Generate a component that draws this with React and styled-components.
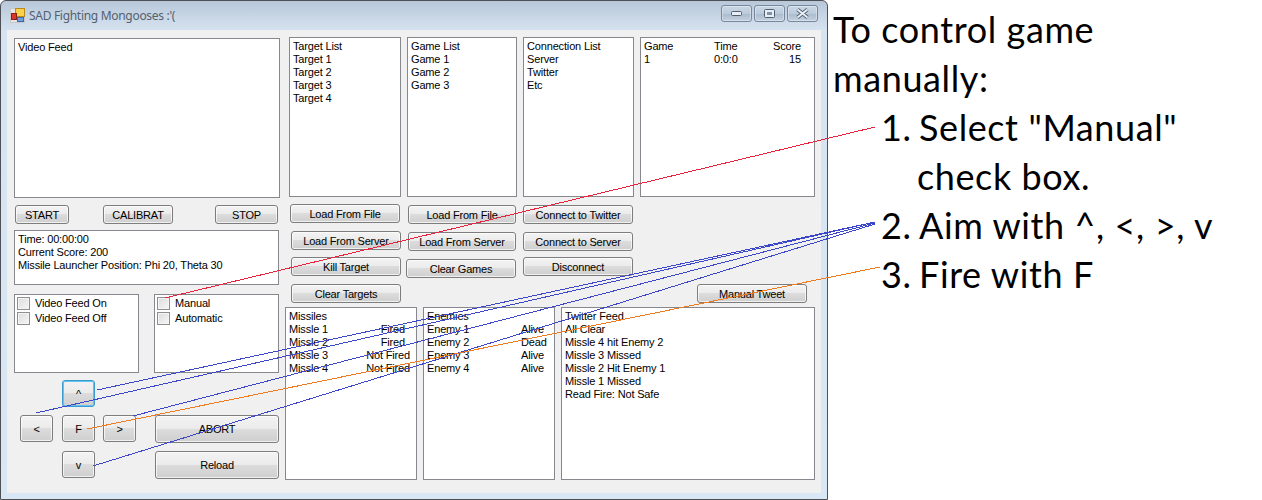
import React from 'react'
import styled, { createGlobalStyle } from 'styled-components'

const GlobalStyle = createGlobalStyle`
  html, body { margin: 0; padding: 0; background: #fff; }
  body { font-family: "Liberation Sans", Arial, sans-serif; font-size: 11px; color: #000; }
`

const Page = styled.div`
  position: relative;
  display: flex;
  width: 1262px;
  height: 500px;
  overflow: hidden;
`
const Window = styled.div`
  box-sizing: border-box;
  width: 828px;
  height: 500px;
  border: 1px solid #4d5157;
  border-radius: 6px 6px 0 0;
  background: linear-gradient(#b8c8d9 0, #d6e3f1 30px, #d9e6f3 100%);
  padding: 0 6px 6px;
  display: flex;
  flex-direction: column;
  letter-spacing: -0.16px;
`
const TitleBar = styled.div`
  height: 29px;
  flex: none;
  display: flex;
  align-items: center;
  padding: 0 3px 0 3px;
`
const TitleText = styled.span`
  margin-left: 4px;
  font-family: "Noto Sans", sans-serif;
  font-size: 12px;
  letter-spacing: -0.3px;
  color: #52616f;
`
const CaptionGroup = styled.div`
  margin-left: auto;
  display: flex;
  gap: 2px;
  margin-top: -5px;
`
const CaptionButton = styled.div`
  box-sizing: border-box;
  width: 31px;
  height: 17px;
  border: 1px solid #76889c;
  border-radius: 3px;
  background: linear-gradient(#c9d7e5, #bccbdb 50%, #aabbcd 52%, #c3d2e0);
  box-shadow: inset 0 0 0 1px rgba(255, 255, 255, 0.35);
  display: flex;
  align-items: center;
  justify-content: center;
`
const Client = styled.div`
  flex: 1;
  background: #f0f0f0;
  display: flex;
  padding-left: 7px;
`
const LeftColumn = styled.div`
  width: 266px;
  flex: none;
  padding-top: 8px;
`
const RightColumn = styled.div`
  margin-left: 5px;
  padding-top: 7px;
`
const Box = styled.div`
  box-sizing: border-box;
  background: #fff;
  border: 1px solid #86888e;
  width: ${p => p.$w}px;
  height: ${p => p.$h}px;
  padding: ${p => p.$pad || '2px 3px'};
  line-height: 13px;
  white-space: nowrap;
`
const ListsRow = styled.div`
  display: flex;
  gap: 6px;
  margin-left: 4px;
`
const FeedsRow = styled.div`
  display: flex;
  gap: 6px;
`
const Row = styled.div`
  display: grid;
  grid-template-columns: ${p => p.$cols};
  padding-right: ${p => p.$inset || 0}px;
`
const Status = styled.span`
  text-align: right;
  padding-right: ${p => p.$inset || 0}px;
`
const Button = styled.button`
  box-sizing: border-box;
  display: block;
  width: ${p => p.$w}px;
  height: ${p => p.$h || 19}px;
  margin: ${p => p.$mt || 0}px 0 0 ${p => p.$ml || 0}px;
  padding: 0;
  font: 11px "Liberation Sans", Arial, sans-serif;
  letter-spacing: -0.2px;
  color: #000;
  border: 1px solid ${p => (p.$focus ? '#3a9bd0' : '#7d7d7d')};
  border-radius: 3px;
  background: linear-gradient(#f3f3f3, #ebebeb 48%, #dcdcdc 50%, #cfcfcf);
  box-shadow: inset 0 0 0 1px ${p => (p.$focus ? '#62c3ee' : 'rgba(255, 255, 255, 0.7)')};
`
const ActionRow = styled.div`
  display: flex;
  margin: 7px 0 6px 1px;
`
const ChecksRow = styled.div`
  display: flex;
  gap: 15px;
  margin-top: 9px;
`
const CheckRow = styled.label`
  display: flex;
  align-items: center;
  gap: 5px;
  height: 15px;
`
const Check = styled.span`
  box-sizing: border-box;
  width: 13px;
  height: 13px;
  border: 1px solid #8e8f8f;
  background: linear-gradient(135deg, #dcdcdc, #f6f6f6);
  box-shadow: inset 0 0 0 1px #f4f4f4;
`
const ControlsRow = styled.div`
  display: flex;
  margin-top: 7px;
`
const Pad = styled.div`
  display: grid;
  grid-template-columns: 42px 41px 33px;
  grid-template-rows: 35px 36px 27px;
  margin-left: 6px;
`
const PadCell = styled.div`
  grid-column: ${p => p.$col};
  grid-row: ${p => p.$row};
`
const BigButtons = styled.div`
  display: flex;
  flex-direction: column;
  gap: 8px;
  margin: 35px 0 0 19px;
`
const ButtonArea = styled.div`
  display: flex;
  height: 103px;
  margin-top: 7px;
`
const ButtonColumn = styled.div`
  padding-top: ${p => p.$top || 0}px;
  margin-left: ${p => p.$ml}px;
`
const Instructions = styled.div`
  padding: 5px 0 0 5px;
  font-family: Lato, "Liberation Sans", sans-serif;
  font-size: 36px;
  letter-spacing: 0.6px;
  line-height: 49px;
  white-space: nowrap;
`
const Line = styled.div`
  padding-left: ${p => p.$indent || 0}px;
`
const Number = styled.span`
  display: inline-block;
  width: 38px;
`
const Overlay = styled.svg`
  position: absolute;
  left: 0;
  top: 0;
  pointer-events: none;
`

const TitleIcon = () => (
  <svg width="15" height="15" viewBox="0 0 15 15">
    <rect x="0.5" y="0.5" width="14" height="14" fill="#e6e6e6" stroke="#c8c8c8" />
    <rect x="5.5" y="0.5" width="9" height="8" fill="#f7d24a" stroke="#b98a1c" />
    <rect x="1.5" y="5.5" width="5" height="6" fill="#d8372c" stroke="#8e1e18" />
    <rect x="7.5" y="9.5" width="6" height="4" fill="#6f9fdc" stroke="#3d6aa8" />
  </svg>
)

const MinGlyph = () => (
  <svg width="11" height="5" viewBox="0 0 11 5">
    <rect x="0.5" y="0.5" width="10" height="4" rx="1" fill="#e8eef4" stroke="#4f5f70" />
  </svg>
)
const MaxGlyph = () => (
  <svg width="11" height="9" viewBox="0 0 11 9">
    <rect x="0.5" y="0.5" width="10" height="8" rx="1" fill="#e8eef4" stroke="#4f5f70" />
    <rect x="3" y="3" width="5" height="3" fill="#8093a6" />
  </svg>
)
const CloseGlyph = () => (
  <svg width="13" height="11" viewBox="0 0 13 11">
    <path d="M1.5 1.5 L11.5 9.5 M11.5 1.5 L1.5 9.5" stroke="#4f5f70" strokeWidth="3.6" />
    <path d="M1.5 1.5 L11.5 9.5 M11.5 1.5 L1.5 9.5" stroke="#e8eef4" strokeWidth="2" />
  </svg>
)

const targets = ['Target List', 'Target 1', 'Target 2', 'Target 3', 'Target 4']
const gameNames = ['Game List', 'Game 1', 'Game 2', 'Game 3']
const connections = ['Connection List', 'Server', 'Twitter', 'Etc']
const missiles = [
  ['Missle 1', 'Fired', 5],
  ['Missle 2', 'Fired', 5],
  ['Missle 3', 'Not Fired', 0],
  ['Missle 4', 'Not Fired', 0],
]
const enemies = [
  ['Enemy 1', 'Alive'],
  ['Enemy 2', 'Dead'],
  ['Enemy 3', 'Alive'],
  ['Enemy 4', 'Alive'],
]
const feed = [
  'Twitter Feed',
  'All Clear',
  'Missle 4 hit Enemy 2',
  'Missle 3 Missed',
  'Missle 2 Hit Enemy 1',
  'Missle 1 Missed',
  'Read Fire: Not Safe',
]
const lines = [
  ['#e8213c', 165, 298, 875, 127],
  ['#3b46c9', 97, 390, 875, 222],
  ['#3b46c9', 36, 413, 875, 222],
  ['#3b46c9', 133, 416, 875, 223],
  ['#3b46c9', 93, 466, 875, 224],
  ['#f07a1e', 87, 429, 880, 267],
]

const App = () => {
  return (
    <Page>
      <GlobalStyle />
      <Window>
        <TitleBar>
          <TitleIcon />
          <TitleText>SAD Fighting Mongooses :'(</TitleText>
          <CaptionGroup>
            <CaptionButton><MinGlyph /></CaptionButton>
            <CaptionButton><MaxGlyph /></CaptionButton>
            <CaptionButton><CloseGlyph /></CaptionButton>
          </CaptionGroup>
        </TitleBar>
        <Client>
          <LeftColumn>
            <Box $w={266} $h={160}>Video Feed</Box>
            <ActionRow>
              <Button $w={54}>START</Button>
              <Button $w={70} $ml={34}>CALIBRAT</Button>
              <Button $w={63} $ml={42}>STOP</Button>
            </ActionRow>
            <Box $w={265} $h={55}>
              <div>Time: 00:00:00</div>
              <div>Current Score: 200</div>
              <div>Missile Launcher Position: Phi 20, Theta 30</div>
            </Box>
            <ChecksRow>
              <Box $w={125} $h={79} $pad="1px 2px">
                <CheckRow><Check />Video Feed On</CheckRow>
                <CheckRow><Check />Video Feed Off</CheckRow>
              </Box>
              <Box $w={125} $h={79} $pad="1px 2px">
                <CheckRow><Check />Manual</CheckRow>
                <CheckRow><Check />Automatic</CheckRow>
              </Box>
            </ChecksRow>
            <ControlsRow>
              <Pad>
                <PadCell $col={2} $row={1}><Button $w={33} $h={27} $focus>^</Button></PadCell>
                <PadCell $col={1} $row={2}><Button $w={33} $h={27}>&lt;</Button></PadCell>
                <PadCell $col={2} $row={2}><Button $w={33} $h={27}>F</Button></PadCell>
                <PadCell $col={3} $row={2}><Button $w={33} $h={27}>&gt;</Button></PadCell>
                <PadCell $col={2} $row={3}><Button $w={33} $h={27}>v</Button></PadCell>
              </Pad>
              <BigButtons>
                <Button $w={124} $h={28}>ABORT</Button>
                <Button $w={124} $h={28}>Reload</Button>
              </BigButtons>
            </ControlsRow>
          </LeftColumn>
          <RightColumn>
            <ListsRow>
              <Box $w={112} $h={160}>{targets.map(t => <div key={t}>{t}</div>)}</Box>
              <Box $w={110} $h={160}>{gameNames.map(t => <div key={t}>{t}</div>)}</Box>
              <Box $w={111} $h={160}>{connections.map(t => <div key={t}>{t}</div>)}</Box>
              <Box $w={175} $h={160}>
                <Row $cols="70px 1fr auto" $inset={10}><span>Game</span><span>Time</span><span>Score</span></Row>
                <Row $cols="70px 1fr auto" $inset={10}><span>1</span><span>0:0:0</span><span>15</span></Row>
              </Box>
            </ListsRow>
            <ButtonArea>
              <ButtonColumn $ml={5}>
                <Button $w={110}>Load From File</Button>
                <Button $w={110} $ml={1} $mt={8}>Load From Server</Button>
                <Button $w={110} $ml={1} $mt={7}>Kill Target</Button>
                <Button $w={110} $ml={1} $mt={8}>Clear Targets</Button>
              </ButtonColumn>
              <ButtonColumn $ml={5} $top={1}>
                <Button $w={108} $ml={2}>Load From File</Button>
                <Button $w={108} $ml={2} $mt={8}>Load From Server</Button>
                <Button $w={110} $mt={8}>Clear Games</Button>
              </ButtonColumn>
              <ButtonColumn $ml={7} $top={1}>
                <Button $w={110}>Connect to Twitter</Button>
                <Button $w={110} $mt={8}>Connect to Server</Button>
                <Button $w={110} $mt={6}>Disconnect</Button>
              </ButtonColumn>
              <ButtonColumn $ml={64} $top={80}>
                <Button $w={110}>Manual Tweet</Button>
              </ButtonColumn>
            </ButtonArea>
            <FeedsRow>
              <Box $w={132} $h={173}>
                <div>Missiles</div>
                {missiles.map(([name, state, inset]) => (
                  <Row key={name} $cols="1fr auto" $inset={3}>
                    <span>{name}</span><Status $inset={inset}>{state}</Status>
                  </Row>
                ))}
              </Box>
              <Box $w={132} $h={173}>
                <div>Enemies</div>
                {enemies.map(([name, state]) => (
                  <Row key={name} $cols="94px 1fr"><span>{name}</span><span>{state}</span></Row>
                ))}
              </Box>
              <Box $w={254} $h={173}>{feed.map(t => <div key={t}>{t}</div>)}</Box>
            </FeedsRow>
          </RightColumn>
        </Client>
      </Window>
      <Instructions>
        <Line>To control game</Line>
        <Line>manually:</Line>
        <Line $indent={48}><Number>1.</Number>Select "Manual"</Line>
        <Line $indent={84}>check box.</Line>
        <Line $indent={48}><Number>2.</Number>Aim with ^, &lt;, &gt;, v</Line>
        <Line $indent={48}><Number>3.</Number>Fire with F</Line>
      </Instructions>
      <Overlay width="1262" height="500">
        {lines.map(([color, x1, y1, x2, y2]) => (
          <line key={`${x1}-${y1}`} x1={x1} y1={y1} x2={x2} y2={y2} stroke={color} strokeWidth="1" shapeRendering="crispEdges" />
        ))}
      </Overlay>
    </Page>
  )
}

export default App
